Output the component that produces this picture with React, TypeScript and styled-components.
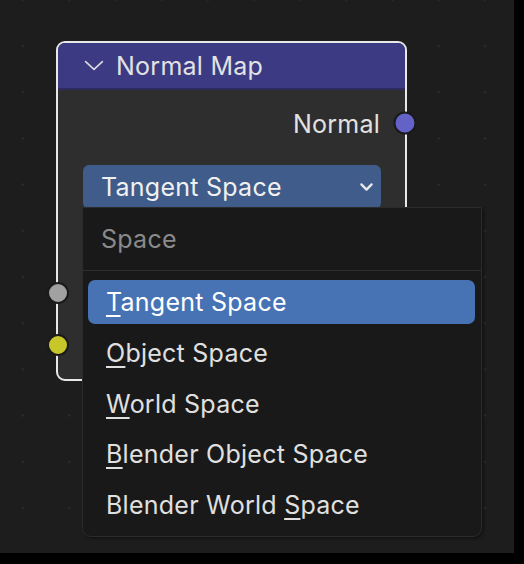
import React from "react";
import styled, { createGlobalStyle } from "styled-components";

const Global = createGlobalStyle`
  html, body { margin: 0; padding: 0; background: #000; }
  body { font-family: Inter, "Noto Sans", sans-serif; }
`;

const Canvas = styled.div`
  position: relative;
  width: 514px;
  height: 553px;
  overflow: hidden;
  background-color: #1d1d1d;
  background-image: radial-gradient(circle, #2d2d2d 0.9px, transparent 1.4px);
  background-size: 46.2px 46.2px;
  background-position: 0px 23px;
`;

const Node = styled.div`
  position: absolute;
  left: 56px;
  top: 41px;
  width: 351px;
  height: 340px;
  box-sizing: border-box;
  border: 2px solid #e8e8e8;
  border-radius: 9px;
  background: #2e2e2e;
  display: flex;
  flex-direction: column;
`;

const Header = styled.div`
  height: 45px;
  background: #3c3a82;
  border-bottom: 2px solid #2d2c5e;
  border-radius: 7px 7px 0 0;
  display: flex;
  align-items: center;
  padding-left: 26px;
  gap: 12px;
  color: #e2e2e2;
  font-size: 25px;
  letter-spacing: 0.25px;
  flex-shrink: 0;
`;

const Body = styled.div`
  display: flex;
  flex-direction: column;
  padding: 0 24px 0 25px;
  position: relative;
  flex: 1;
`;

const OutputRow = styled.div`
  height: 67px;
  display: flex;
  align-items: center;
  justify-content: flex-end;
  color: #e2e2e2;
  font-size: 25px;
  letter-spacing: 0.25px;
  padding-right: 1px;
`;

const Dropdown = styled.div`
  margin-top: 8px;
  height: 44px;
  width: 298px;
  box-sizing: border-box;
  background: #3f5c8a;
  border-radius: 6px;
  display: flex;
  align-items: center;
  justify-content: space-between;
  padding: 0 7px 0 18px;
  color: #f0f0f0;
  font-size: 25px;
  letter-spacing: 0.25px;
`;

const Socket = styled.div<{ $color: string; $x: number; $y: number; $size?: number }>`
  position: absolute;
  left: ${(p) => p.$x}px;
  top: ${(p) => p.$y}px;
  width: ${(p) => p.$size ?? 18}px;
  height: ${(p) => p.$size ?? 18}px;
  transform: translate(-50%, -50%);
  border-radius: 50%;
  background: ${(p) => p.$color};
  border: 2.5px solid #1a1a1a;
`;

const Menu = styled.div`
  position: absolute;
  left: 82px;
  top: 207px;
  width: 400px;
  height: 330px;
  box-sizing: border-box;
  background: #191919;
  border: 1px solid #2b2b2b;
  border-radius: 0 0 9px 9px;
  box-shadow: 2px 2px 3px rgba(0, 0, 0, 0.35);
  display: flex;
  flex-direction: column;
`;

const MenuTitle = styled.div`
  height: 62px;
  display: flex;
  align-items: center;
  padding-left: 18px;
  color: #8a8a8a;
  font-size: 25px;
  letter-spacing: 0.25px;
  border-bottom: 1px solid #2e2e2e;
  flex-shrink: 0;
`;

const MenuList = styled.div`
  display: flex;
  flex-direction: column;
  gap: 6.8px;
  padding: 9px 6px 0 5px;
`;

const Item = styled.div<{ $active?: boolean }>`
  height: 44px;
  border-radius: 7px;
  display: flex;
  align-items: center;
  padding-left: 18px;
  font-size: 25px;
  letter-spacing: 0.25px;
  color: ${(p) => (p.$active ? "#ffffff" : "#e0e0e0")};
  background: ${(p) => (p.$active ? "#4772b3" : "transparent")};
`;

const Key = styled.span`
  text-decoration: underline;
  text-decoration-thickness: 1.5px;
  text-underline-offset: 4px;
`;

const Chevron = ({ w, h, sw, color }: { w: number; h: number; sw: number; color: string }) => (
  <svg width={w} height={h} viewBox={`0 0 ${w} ${h}`} fill="none">
    <path
      d={`M${sw} ${sw} L${w / 2} ${h - sw} L${w - sw} ${sw}`}
      stroke={color}
      strokeWidth={sw}
      strokeLinecap="round"
      strokeLinejoin="round"
    />
  </svg>
);

export default function App() {
  return (
    <>
      <Global />
      <Canvas>
        <Node>
          <Header>
            <Chevron w={20} h={11} sw={1.6} color="#dcdcdc" />
            <span>Normal Map</span>
          </Header>
          <Body>
            <OutputRow>Normal</OutputRow>
            <Dropdown>
              <span>Tangent Space</span>
              <Chevron w={15} h={10} sw={2.4} color="#e8e8e8" />
            </Dropdown>
          </Body>
        </Node>
        <Socket $color="#6363c7" $x={405} $y={123} $size={19} />
        <Socket $color="#a1a1a1" $x={58} $y={293} $size={18} />
        <Socket $color="#c7c729" $x={58} $y={345} $size={18} />
        <Menu>
          <MenuTitle>Space</MenuTitle>
          <MenuList>
            <Item $active>
              <span>
                <Key>T</Key>angent Space
              </span>
            </Item>
            <Item>
              <span>
                <Key>O</Key>bject Space
              </span>
            </Item>
            <Item>
              <span>
                <Key>W</Key>orld Space
              </span>
            </Item>
            <Item>
              <span>
                <Key>B</Key>lender Object Space
              </span>
            </Item>
            <Item>
              <span>
                Blender World <Key>S</Key>pace
              </span>
            </Item>
          </MenuList>
        </Menu>
      </Canvas>
    </>
  );
}
